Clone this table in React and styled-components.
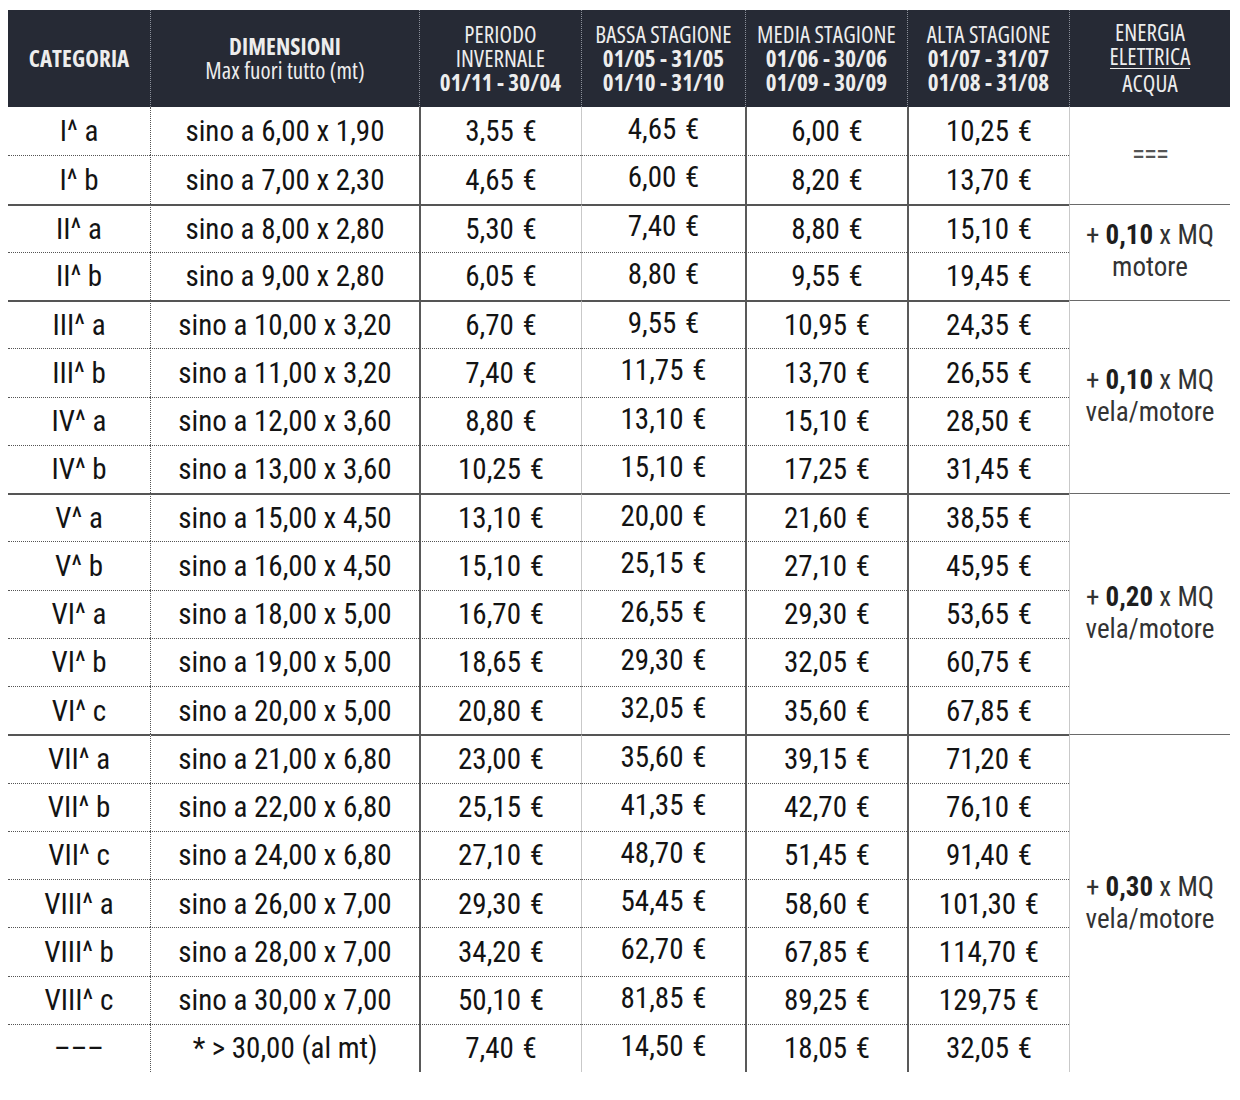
import styled, { createGlobalStyle } from "styled-components";

const GlobalStyle = createGlobalStyle`
  body {
    margin: 0;
    background: #fff;
    font-family: "Roboto Condensed", "Open Sans", "Liberation Sans", sans-serif;
  }
`

const Page = styled.main`
  padding: 10px 10px 0 8px;
`

const Grid = styled.div`
  display: grid;
  grid-template-columns: 142px 269px 162px 164px 162px 162px 161px;
  grid-template-rows: 97px repeat(20, 48.25px);
  width: 1222px;
  color: #131313;
`

// header uses the narrower condensed face, closer to the print original
const HeadCell = styled.div`
  display: flex;
  flex-direction: column;
  align-items: center;
  justify-content: center;
  padding-bottom: 2px;
  box-sizing: border-box;
  background: #262a35;
  color: #ededed;
  font-family: "Open Sans", "Roboto Condensed", sans-serif;
  font-stretch: 75%;
  font-size: 23px;
  line-height: 24px;
  letter-spacing: 0.1px;
  text-align: center;
  white-space: nowrap;
  border-left: ${p => (p.$first ? "none" : "1px dotted #8b909a")};
`

const Line = styled.span`
  font-weight: ${p => (p.$bold ? 700 : 400)};
`

const Over = styled.span`
  display: inline-block;
  border-bottom: 1px solid #ededed;
  margin-bottom: 2px;
`

const Cell = styled.div`
  display: flex;
  align-items: center;
  justify-content: center;
  box-sizing: border-box;
  padding-bottom: ${p => (p.$lift ? "5px" : "0")};
  font-size: 29px;
  line-height: 32px;
  word-spacing: ${p => (p.$price ? "2px" : "0")};
  white-space: nowrap;
  border-top: ${p => (p.$group ? "2px solid #555" : p.$firstRow ? "none" : "1px dotted #555")};
  border-left: ${p => p.$edge};
`

const Energy = styled.div`
  grid-row: span ${p => p.$span};
  display: flex;
  flex-direction: column;
  align-items: center;
  justify-content: center;
  box-sizing: border-box;
  padding-bottom: 2px;
  font-size: 27px;
  line-height: 32px;
  color: #333;
  white-space: nowrap;
  border-top: ${p => (p.$firstRow ? "none" : "1px solid #6a6a6a")};
  border-left: 1px solid #c9c9c9;
`

const Num = styled.b`
  font-weight: 700;
  color: #1e1e1e;
`

const Equals = styled.span`
  letter-spacing: -1px;
  color: #555;
`

const edges = [
  "none",
  "1px dotted #555",
  "2px solid #595959",
  "1px solid #c9c9c9",
  "2px solid #595959",
  "2px solid #595959",
]

const rows = [
  ["I^ a", "sino a 6,00 x 1,90", "3,55", "4,65", "6,00", "10,25"],
  ["I^ b", "sino a 7,00 x 2,30", "4,65", "6,00", "8,20", "13,70"],
  ["II^ a", "sino a 8,00 x 2,80", "5,30", "7,40", "8,80", "15,10"],
  ["II^ b", "sino a 9,00 x 2,80", "6,05", "8,80", "9,55", "19,45"],
  ["III^ a", "sino a 10,00 x 3,20", "6,70", "9,55", "10,95", "24,35"],
  ["III^ b", "sino a 11,00 x 3,20", "7,40", "11,75", "13,70", "26,55"],
  ["IV^ a", "sino a 12,00 x 3,60", "8,80", "13,10", "15,10", "28,50"],
  ["IV^ b", "sino a 13,00 x 3,60", "10,25", "15,10", "17,25", "31,45"],
  ["V^ a", "sino a 15,00 x 4,50", "13,10", "20,00", "21,60", "38,55"],
  ["V^ b", "sino a 16,00 x 4,50", "15,10", "25,15", "27,10", "45,95"],
  ["VI^ a", "sino a 18,00 x 5,00", "16,70", "26,55", "29,30", "53,65"],
  ["VI^ b", "sino a 19,00 x 5,00", "18,65", "29,30", "32,05", "60,75"],
  ["VI^ c", "sino a 20,00 x 5,00", "20,80", "32,05", "35,60", "67,85"],
  ["VII^ a", "sino a 21,00 x 6,80", "23,00", "35,60", "39,15", "71,20"],
  ["VII^ b", "sino a 22,00 x 6,80", "25,15", "41,35", "42,70", "76,10"],
  ["VII^ c", "sino a 24,00 x 6,80", "27,10", "48,70", "51,45", "91,40"],
  ["VIII^ a", "sino a 26,00 x 7,00", "29,30", "54,45", "58,60", "101,30"],
  ["VIII^ b", "sino a 28,00 x 7,00", "34,20", "62,70", "67,85", "114,70"],
  ["VIII^ c", "sino a 30,00 x 7,00", "50,10", "81,85", "89,25", "129,75"],
  ["–––", "* > 30,00 (al mt)", "7,40", "14,50", "18,05", "32,05"],
]

// energy column: first row of the block -> [rows spanned, content]
const energy = {
  0: [2, null],
  2: [2, { num: "0,10", what: "motore" }],
  4: [4, { num: "0,10", what: "vela/motore" }],
  8: [5, { num: "0,20", what: "vela/motore" }],
  13: [7, { num: "0,30", what: "vela/motore" }],
}

const groupStarts = [2, 4, 8, 13]

const seasons = [
  ["BASSA STAGIONE", "01/05 - 31/05", "01/10 - 31/10"],
  ["MEDIA STAGIONE", "01/06 - 30/06", "01/09 - 30/09"],
  ["ALTA STAGIONE", "01/07 - 31/07", "01/08 - 31/08"],
]

const App = () => {
  return (
    <Page>
      <GlobalStyle />
      <Grid>
        <HeadCell $first>
          <Line $bold>CATEGORIA</Line>
        </HeadCell>
        <HeadCell>
          <Line $bold>DIMENSIONI</Line>
          <Line>Max fuori tutto (mt)</Line>
        </HeadCell>
        <HeadCell>
          <Line>PERIODO</Line>
          <Line>INVERNALE</Line>
          <Line $bold>01/11 - 30/04</Line>
        </HeadCell>
        {seasons.map(([name, a, b]) => (
          <HeadCell key={name}>
            <Line>{name}</Line>
            <Line $bold>{a}</Line>
            <Line $bold>{b}</Line>
          </HeadCell>
        ))}
        <HeadCell>
          <Line>ENERGIA</Line>
          <Over>ELETTRICA</Over>
          <Line>ACQUA</Line>
        </HeadCell>

        {rows.map((r, i) => {
          const group = groupStarts.includes(i)
          const e = energy[i]
          return [
            ...r.map((v, j) => (
              <Cell
                key={`${i}-${j}`}
                $group={group}
                $firstRow={i === 0}
                $edge={edges[j]}
                $lift={j === 3}
                $price={j >= 2}
              >
                {j >= 2 ? `${v} €` : v}
              </Cell>
            )),
            e && (
              <Energy key={`e-${i}`} $span={e[0]} $firstRow={i === 0}>
                {e[1] ? (
                  <>
                    <span>
                      + <Num>{e[1].num}</Num> x MQ
                    </span>
                    <span>{e[1].what}</span>
                  </>
                ) : (
                  <Equals>===</Equals>
                )}
              </Energy>
            ),
          ]
        })}
      </Grid>
    </Page>
  )
}

export default App
